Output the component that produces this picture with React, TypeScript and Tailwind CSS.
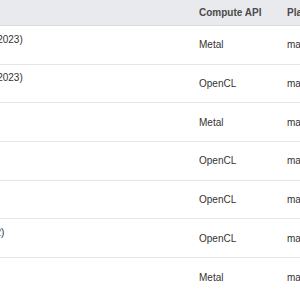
import React from "react";

type Row = { l1: string; l2?: string; api: string; platform: string };

const rows: Row[] = [
  { l1: "Mac Studio (2023)", l2: "M2 Ultra", api: "Metal", platform: "macOS" },
  { l1: "Mac Studio (2023)", l2: "M2 Ultra", api: "OpenCL", platform: "macOS" },
  { l1: "iMac (M3)", api: "Metal", platform: "macOS" },
  { l1: "iMac (M3)", api: "OpenCL", platform: "macOS" },
  { l1: "iMac (M1)", api: "OpenCL", platform: "macOS" },
  { l1: "Mac mini (M2)", l2: "M2 Pro", api: "OpenCL", platform: "macOS" },
  { l1: "MacBook Air", api: "Metal", platform: "macOS" },
];

export default function App() {
  return (
    <div
      className="w-[300px] h-[300px] overflow-hidden bg-white text-[10px] text-[#333]"
      style={{ fontFamily: '"Liberation Sans", Arial, Helvetica, sans-serif' }}
    >
      <div className="ml-[-67px] w-[500px]">
        <div className="grid grid-cols-[258px_88px_154px] h-[26px] bg-[#e9eaed] border-b border-[#dcdcdf] items-center font-bold text-[#4a4a4a]">
          <div className="pl-2">Device</div>
          <div className="pl-2">Compute API</div>
          <div className="pl-2">Platform</div>
        </div>
        {rows.map((r, i) => (
          <div
            key={i}
            className={
              i === rows.length - 1
                ? "grid grid-cols-[258px_88px_154px] h-[38.67px] items-center"
                : "grid grid-cols-[258px_88px_154px] h-[38.67px] items-center border-b border-[#e6e6e8]"
            }
          >
            <div className="pl-2 leading-[11px] whitespace-nowrap">
              <div>{r.l1}</div>
              {r.l2 && <div>{r.l2}</div>}
            </div>
            <div className="pl-2">{r.api}</div>
            <div className="pl-2">{r.platform}</div>
          </div>
        ))}
      </div>
    </div>
  );
}
